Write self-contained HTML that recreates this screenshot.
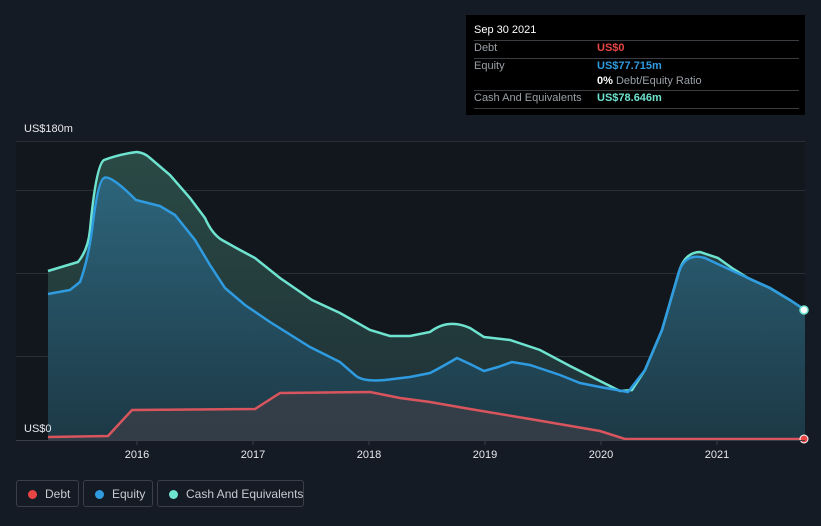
<!DOCTYPE html>
<html><head><style>
body{margin:0;width:821px;height:526px;background:#151b24;font-family:"Liberation Sans",sans-serif;overflow:hidden;position:relative}
.tip{position:absolute;left:466px;top:15px;width:339px;height:100px;background:#000;color:#9aa0a6;font-size:11px}
.row{position:absolute;left:8px;right:6px;border-top:1px solid #3a3d42}
.lg{position:absolute;top:480px;height:27px;border:1px solid #3a3f48;border-radius:3px;color:#c7cbd1;font-size:12px;line-height:27px;box-sizing:border-box;white-space:nowrap}
.lg i{position:absolute;left:11px;top:9px;width:9px;height:9px;border-radius:50%}
</style></head><body>
<svg width="821" height="526" style="position:absolute;left:0;top:0">
<defs>
<linearGradient id="gc" x1="0" y1="0" x2="0" y2="1"><stop offset="0" stop-color="#2a4a45"/><stop offset="1" stop-color="#1e3036"/></linearGradient>
<linearGradient id="ge" x1="0" y1="0" x2="0" y2="1"><stop offset="0" stop-color="#2e6a85"/><stop offset="1" stop-color="#1c3a48"/></linearGradient>
</defs>
<rect x="16" y="141" width="789" height="299" fill="#12161d"/>
<g stroke="#2a2f37" stroke-width="1"><line x1="16" y1="141.5" x2="805" y2="141.5"/><line x1="16" y1="190.5" x2="805" y2="190.5"/><line x1="16" y1="273.5" x2="805" y2="273.5"/><line x1="16" y1="356.5" x2="805" y2="356.5"/></g>
<path d="M48,271 L78,262 Q88,250 90,230 Q96,165 104,160 Q120,154 137,152 Q145,153 150,158 L170,175 L190,198 L205,218 Q212,234 222,240 L240,250 L255,258 L280,278 L312,300 L340,313 L370,330 L390,336 L410,336 L430,332 Q448,318 470,328 L484,337 L510,340 L540,350 L570,366 L600,381 L620,391 L632,390 L645,370 L662,330 L678,275 Q684,252 700,252 L718,258 L732,268 L748,278 L770,288 L790,300 L805,310 L805,440 L48,440Z" fill="url(#gc)"/>
<path d="M48,294 L70,290 L80,282 Q88,260 92,230 Q98,180 104,178 Q110,174 136,200 L160,206 L175,215 L195,240 L210,265 L225,288 L245,305 L270,322 L310,347 L340,362 L355,375 Q362,382 385,380 L410,377 L430,373 Q440,368 457,358 L470,364 L484,371 L498,367 L512,362 L530,365 L560,375 L580,383 L600,387 L628,392 L645,370 L662,330 L678,275 Q684,252 705,258 L720,265 L748,278 L770,288 L790,300 L805,310 L805,440 L48,440Z" fill="url(#ge)" opacity=".85"/>
<path d="M48,437 L108,436 L132,410 L255,409 L280,393 L370,392 L400,398 L430,402 L470,409 L530,419 L600,431 L625,439 L805,439 L805,440 L48,440Z" fill="#3a3e48" opacity=".8"/>
<path d="M48,271 L78,262 Q88,250 90,230 Q96,165 104,160 Q120,154 137,152 Q145,153 150,158 L170,175 L190,198 L205,218 Q212,234 222,240 L240,250 L255,258 L280,278 L312,300 L340,313 L370,330 L390,336 L410,336 L430,332 Q448,318 470,328 L484,337 L510,340 L540,350 L570,366 L600,381 L620,391 L632,390 L645,370 L662,330 L678,275 Q684,252 700,252 L718,258 L732,268 L748,278 L770,288 L790,300 L805,310" fill="none" stroke="#6ee3cf" stroke-width="2.5"/>
<path d="M48,294 L70,290 L80,282 Q88,260 92,230 Q98,180 104,178 Q110,174 136,200 L160,206 L175,215 L195,240 L210,265 L225,288 L245,305 L270,322 L310,347 L340,362 L355,375 Q362,382 385,380 L410,377 L430,373 Q440,368 457,358 L470,364 L484,371 L498,367 L512,362 L530,365 L560,375 L580,383 L600,387 L628,392 L645,370 L662,330 L678,275 Q684,252 705,258 L720,265 L748,278 L770,288 L790,300 L805,310" fill="none" stroke="#2f9be0" stroke-width="2.5"/>
<path d="M48,437 L108,436 L132,410 L255,409 L280,393 L370,392 L400,398 L430,402 L470,409 L530,419 L600,431 L625,439 L805,439" fill="none" stroke="#d9555d" stroke-width="2.5"/>
<circle cx="804" cy="310" r="4" fill="#fff" stroke="#6ee3cf" stroke-width="1.5"/>
<circle cx="804" cy="439" r="4" fill="#e84545" stroke="#fff" stroke-width="1"/>
<line x1="16" y1="440.5" x2="805" y2="440.5" stroke="#3a3f48"/>
<g stroke="#3a3f48"><line x1="137" y1="441" x2="137" y2="445"/><line x1="253" y1="441" x2="253" y2="445"/><line x1="369" y1="441" x2="369" y2="445"/><line x1="485" y1="441" x2="485" y2="445"/><line x1="601" y1="441" x2="601" y2="445"/><line x1="717" y1="441" x2="717" y2="445"/></g>
<g fill="#e6e8eb" font-size="11" text-anchor="middle" font-family="Liberation Sans, sans-serif"><text x="137" y="458">2016</text><text x="253" y="458">2017</text><text x="369" y="458">2018</text><text x="485" y="458">2019</text><text x="601" y="458">2020</text><text x="717" y="458">2021</text></g>
<g fill="#e6e8eb" font-size="11" font-family="Liberation Sans, sans-serif"><text x="24" y="132">US$180m</text><text x="24" y="432">US$0</text></g>
</svg>
<div class="tip">
<div style="position:absolute;left:8px;top:9px;color:#fff">Sep 30 2021</div>
<div class="row" style="top:25px"></div>
<div style="position:absolute;left:8px;top:27px">Debt</div><div style="position:absolute;left:131px;top:27px;color:#e84545;font-weight:bold">US$0</div>
<div class="row" style="top:43px"></div>
<div style="position:absolute;left:8px;top:45px">Equity</div><div style="position:absolute;left:131px;top:45px;color:#2f9be0;font-weight:bold">US$77.715m</div>
<div style="position:absolute;left:131px;top:60px"><b style="color:#fff">0%</b> Debt/Equity Ratio</div>
<div class="row" style="top:75px"></div>
<div style="position:absolute;left:8px;top:77px">Cash And Equivalents</div><div style="position:absolute;left:131px;top:77px;color:#6ee3cf;font-weight:bold">US$78.646m</div>
<div class="row" style="top:93px"></div>
</div>
<div class="lg" style="left:16px;width:63px"><i style="background:#e84545"></i><span style="position:absolute;left:28px">Debt</span></div>
<div class="lg" style="left:83px;width:70px"><i style="background:#2f9be0"></i><span style="position:absolute;left:28px">Equity</span></div>
<div class="lg" style="left:157px;width:147px"><i style="background:#6ee3cf"></i><span style="position:absolute;left:28px">Cash And Equivalents</span></div>
</body></html>
